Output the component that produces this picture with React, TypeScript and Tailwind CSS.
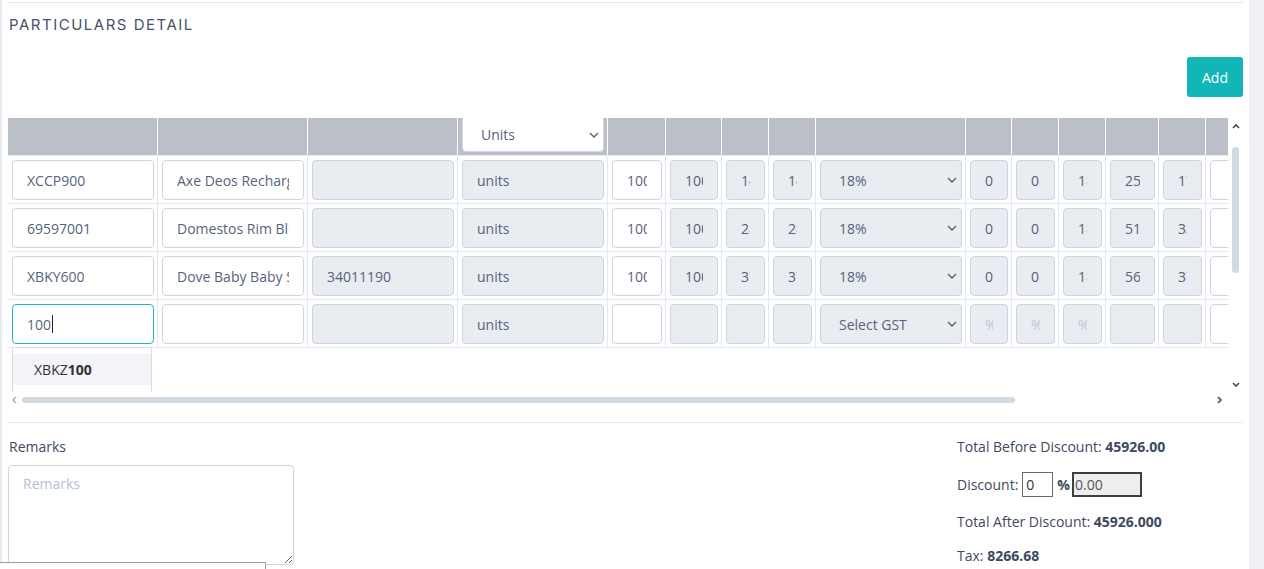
import React from "react";

type Kind = "in" | "dis" | "sel" | "focus" | "ph";
type Cell = { k: Kind; v?: string };

const COLS = [150, 150, 150, 150, 58, 56, 47, 47, 150, 46, 47, 47, 53, 47, 150];

const i = (v = ""): Cell => ({ k: "in", v });
const d = (v = ""): Cell => ({ k: "dis", v });
const s = (v: string): Cell => ({ k: "sel", v });

const ROWS: Cell[][] = [
  [i("XCCP900"), i("Axe Deos Recharge 150ml"), d(""), d("units"), i("100"), d("100"), d("145.00"), d("145.00"), s("18%"), d("0"), d("0"), d("18"), d("2500.00"), d("1750.00"), i("")],
  [i("69597001"), i("Domestos Rim Block 50g"), d(""), d("units"), i("100"), d("100"), d("28.50"), d("28.50"), s("18%"), d("0"), d("0"), d("18"), d("5130.00"), d("3300.00"), i("")],
  [i("XBKY600"), i("Dove Baby Baby Soap 75g"), d("34011190"), d("units"), i("100"), d("100"), d("37.80"), d("37.80"), s("18%"), d("0"), d("0"), d("18"), d("5670.00"), d("3780.00"), i("")],
  [{ k: "focus", v: "100" }, i(""), d(""), d("units"), i(""), d(""), d(""), d(""), s("Select GST"), { k: "ph", v: "%" }, { k: "ph", v: "%" }, { k: "ph", v: "%" }, d(""), d(""), i("")],
];

const Chevron = () => (
  <svg width="10" height="6" viewBox="0 0 10 6" className="shrink-0">
    <path d="M1 1l4 4 4-4" fill="none" stroke="#555b66" strokeWidth="1.3" />
  </svg>
);

const inputBase =
  "h-[40px] w-full rounded-[4px] border px-[14px] text-[14px] text-[#56637d] outline-none";

function CellView({ c }: { c: Cell }) {
  if (c.k === "sel") {
    return (
      <div className="flex h-[40px] w-full items-center justify-between rounded-[4px] border border-[#cdd5e3] bg-[#e9ecf0] pl-[18px] pr-[4px] text-[14px] text-[#56637d]">
        <span>{c.v}</span>
        <Chevron />
      </div>
    );
  }
  if (c.k === "focus") {
    return (
      <div className="flex h-[40px] w-full items-center rounded-[4px] border border-[#1bb7b7] bg-white px-[14px] text-[14px] text-[#56637d]">
        <span>{c.v}</span>
        <span className="ml-px inline-block h-[18px] w-px bg-[#222]" />
      </div>
    );
  }
  if (c.k === "ph") {
    return (
      <input
        readOnly
        placeholder={c.v}
        className={`${inputBase} border-[#cdd5e3] bg-[#e9ecf0] text-[12px] placeholder:text-[#bcc6d6]`}
      />
    );
  }
  return (
    <input
      readOnly
      value={c.v}
      className={`${inputBase} border-[#cdd5e3] ${c.k === "dis" ? "bg-[#e9ecf0]" : "bg-white"}`}
    />
  );
}

const UpArrow = () => (
  <svg width="8" height="6" viewBox="0 0 8 6">
    <path d="M1 5l3-3 3 3" fill="none" stroke="#4a4a4a" strokeWidth="1.6" />
  </svg>
);
const DownArrow = () => (
  <svg width="8" height="6" viewBox="0 0 8 6">
    <path d="M1 1l3 3 3-3" fill="none" stroke="#4a4a4a" strokeWidth="1.6" />
  </svg>
);
const LeftArrow = () => (
  <svg width="6" height="8" viewBox="0 0 6 8">
    <path d="M5 1L2 4l3 3" fill="none" stroke="#b0b0b0" strokeWidth="1.6" />
  </svg>
);
const RightArrow = () => (
  <svg width="6" height="8" viewBox="0 0 6 8">
    <path d="M1 1l3 3-3 3" fill="none" stroke="#4a4a4a" strokeWidth="1.6" />
  </svg>
);

export default function App() {
  return (
    <div className="relative flex h-[569px] w-full overflow-hidden bg-[#eff0f5] font-['Open_Sans',sans-serif]">
      <div className="w-[2px] shrink-0 bg-[#e8eaf0]" />
      <div className="flex w-[1247px] shrink-0 flex-col bg-white px-[6px] pt-[2px]">
        <div className="border-t border-[#e6e8ec]" />
        <div className="mt-[12px] h-[20px] pl-[1px] font-['Inter',sans-serif] text-[15px] font-normal leading-[20px] tracking-[0.1em] text-[#46526a]">
          PARTICULARS DETAIL
        </div>
        <div className="mt-[22px] flex justify-end">
          <button className="h-[40px] w-[56px] rounded-[3px] bg-[#12b6b6] text-[14px] font-medium text-white">
            Add
          </button>
        </div>

        <div className="mt-[21px] flex flex-col">
          <div className="flex">
            <div className="relative h-[274px] w-[1220px] overflow-hidden">
              <div className="flex w-max">
                {COLS.map((w, idx) => (
                  <div
                    key={idx}
                    style={{ width: w }}
                    className="h-[37px] shrink-0 border-r border-white bg-[#bbc0c8] pl-[4px] pr-[3px]"
                  >
                    {idx === 3 && (
                      <div className="-mt-px flex h-[35px] items-center justify-between rounded-b-[4px] border border-[#d3d8e2] bg-white pl-[18px] pr-[4px] text-[14px] text-[#56637d]">
                        <span>Units</span>
                        <Chevron />
                      </div>
                    )}
                  </div>
                ))}
              </div>
              {ROWS.map((row, r) => (
                <div key={r} className={`flex w-max border-t border-[#e3e9f1] ${r === ROWS.length - 1 ? "border-b" : ""}`}>
                  {row.map((c, idx) => (
                    <div
                      key={idx}
                      style={{ width: COLS[idx] }}
                      className="h-[47px] shrink-0 border-r border-[#e3e9f1] pl-[4px] pr-[3px] pt-[4px]"
                    >
                      <CellView c={c} />
                    </div>
                  ))}
                </div>
              ))}
              <div className="absolute left-[4px] top-[229px] h-[60px] w-[140px] border border-[#d8dde6] bg-white pt-[6px]">
                <div className="flex h-[31px] items-center bg-[#f3f4f8] pl-[21px] text-[14px] text-[#333]">
                  XBKZ<b>100</b>
                </div>
              </div>
            </div>
            <div className="flex h-[274px] w-[15px] flex-col items-center pb-[4px] pt-[5px]">
              <UpArrow />
              <div className="mt-[18px] h-[126px] w-[7px] rounded-full bg-[#d1d9e1]" />
              <div className="flex-1" />
              <DownArrow />
            </div>
          </div>
          <div className="flex h-[16px] items-center pl-[3px] pr-[20px]">
            <LeftArrow />
            <div className="ml-[5px] h-[6px] w-[993px] rounded-full bg-[#d1d9e1]" />
            <div className="flex-1" />
            <RightArrow />
          </div>
        </div>

        <div className="mt-[14px] border-t border-[#e6e8ec]" />

        <div className="flex pt-[14px] text-[14px] text-[#3e4a5e]">
          <div className="flex-1">
            <div className="h-[20px] pl-[1px] leading-[20px]">Remarks</div>
            <textarea
              placeholder="Remarks"
              className="mt-[8px] block h-[100px] w-[286px] rounded-[4px] border border-[#cdd5e3] px-[14px] pt-[8px] text-[14px] leading-[20px] outline-none placeholder:text-[#b5c0d5]"
            />
          </div>
          <div className="flex w-[286px] flex-col gap-[15px]">
            <div className="h-[20px] leading-[20px]">
              Total Before Discount: <b>45926.00</b>
            </div>
            <div className="flex h-[25px] items-center gap-[4px]">
              <span>Discount:</span>
              <input
                readOnly
                value="0"
                className="h-[25px] w-[31px] border border-[#6b6b6b] px-[3px] text-[14px] text-[#333] outline-none"
              />
              <b>%</b>
              <input
                readOnly
                value="0.00"
                className="-ml-[2px] h-[25px] w-[70px] border-2 border-[#3f3f3f] bg-[#eeeeee] px-[1px] text-[14px] text-[#555] outline-none"
              />
            </div>
            <div className="h-[20px] leading-[20px]">
              Total After Discount: <b>45926.000</b>
            </div>
            <div className="-mt-[1px] h-[20px] leading-[20px]">
              Tax: <b>8266.68</b>
            </div>
          </div>
        </div>
      </div>
      <div className="flex-1 bg-[#f0f1f6]" />
      <div className="absolute left-0 top-[562px] h-[12px] w-[266px] border-r border-t border-[#9d9d9d] bg-white" />
    </div>
  );
}
